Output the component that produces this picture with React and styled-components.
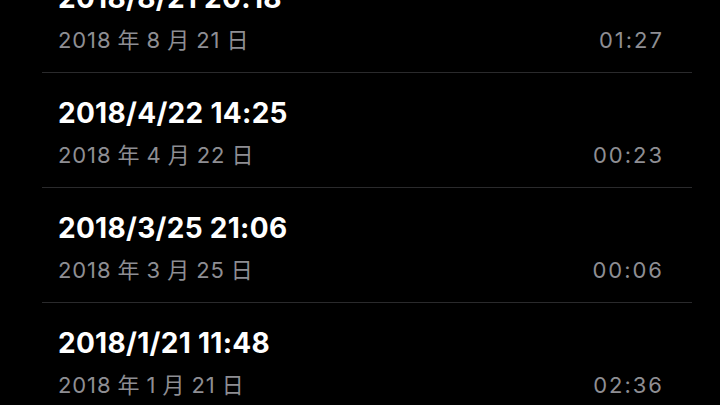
import React from "react";
import styled, { createGlobalStyle } from "styled-components";

const Global = createGlobalStyle`
  html, body { margin: 0; padding: 0; background: #000; }
  body { width: 720px; height: 405px; overflow: hidden; }
`;

const Screen = styled.div`
  width: 720px;
  height: 405px;
  overflow: hidden;
  background: #000;
  font-family: Inter, "Noto Sans CJK SC", sans-serif;
`;

const List = styled.ul`
  list-style: none;
  margin: -42px 28px 0 42px;
  padding: 0;
`;

const Row = styled.li`
  padding: 23px 30px 18px 16px;
  border-bottom: 1px solid #2a2a2c;
`;

const Title = styled.div`
  color: #fff;
  font-weight: 700;
  font-size: 28px;
  line-height: 34px;
  letter-spacing: 0.3px;
`;

const Meta = styled.div`
  margin-top: 11px;
  display: flex;
  justify-content: space-between;
  align-items: baseline;
  color: #8e8e93;
  font-size: 22px;
  line-height: 28px;
`;

const DateText = styled.span`
  letter-spacing: 0.9px;
  word-spacing: -1px;
`;

const Duration = styled.span`
  letter-spacing: 2px;
  margin-right: -2px;
`;

const memos = [
  { title: "2018/8/21 20:18", date: ["2018", "8", "21"], dur: "01:27" },
  { title: "2018/4/22 14:25", date: ["2018", "4", "22"], dur: "00:23" },
  { title: "2018/3/25 21:06", date: ["2018", "3", "25"], dur: "00:06" },
  { title: "2018/1/21 11:48", date: ["2018", "1", "21"], dur: "02:36" },
];

export default function App() {
  return (
    <Screen>
      <Global />
      <List>
        {memos.map((m) => (
          <Row key={m.title}>
            <Title>{m.title}</Title>
            <Meta>
              <DateText>
                {m.date[0]} 年 {m.date[1]} 月 {m.date[2]} 日
              </DateText>
              <Duration>{m.dur}</Duration>
            </Meta>
          </Row>
        ))}
      </List>
    </Screen>
  );
}
